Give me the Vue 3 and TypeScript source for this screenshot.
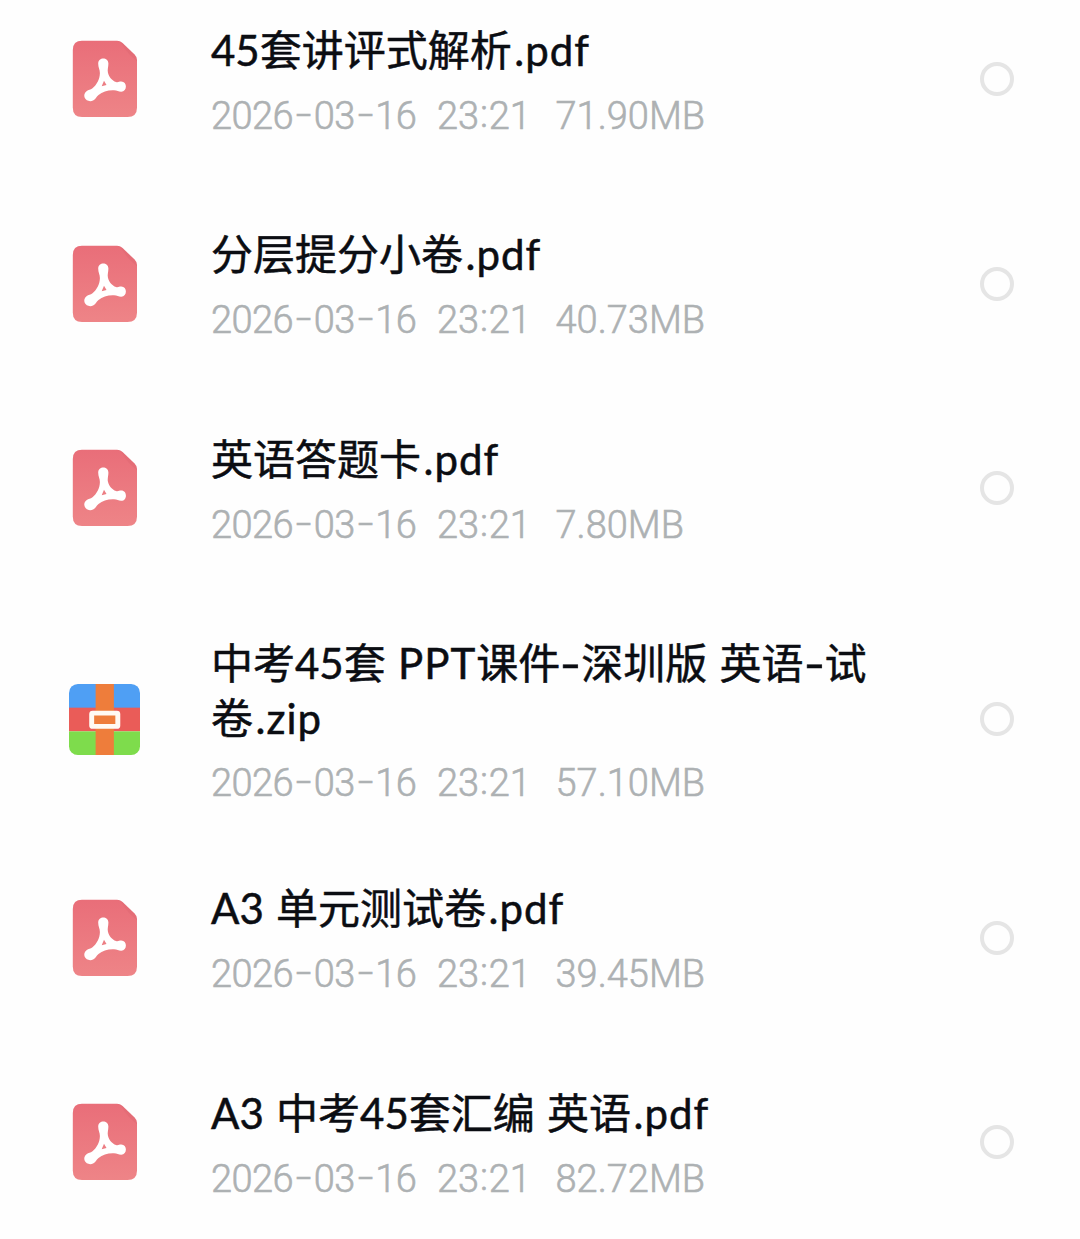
<script setup lang="ts">
interface FileEntry {
  kind: 'pdf' | 'zip'
  title: string[]
  size: string
}

const files: FileEntry[] = [
  { kind: 'pdf', title: ['45套讲评式解析.pdf'], size: '71.90MB' },
  { kind: 'pdf', title: ['分层提分小卷.pdf'], size: '40.73MB' },
  { kind: 'pdf', title: ['英语答题卡.pdf'], size: '7.80MB' },
  { kind: 'zip', title: ['中考45套 PPT课件-深圳版 英语-试', '卷.zip'], size: '57.10MB' },
  { kind: 'pdf', title: ['A3 单元测试卷.pdf'], size: '39.45MB' },
  { kind: 'pdf', title: ['A3 中考45套汇编 英语.pdf'], size: '82.72MB' },
]

const date = '2026-03-16'
const time = '23:21'

// Splits text into runs that need their own spacing: hyphens, colons, extensions, capitals.
const parts = (text: string): string[] => text.split(/(-|:|\.[a-z]+|PPT)/).filter(Boolean)
const kindOf = (part: string): string => {
  if (part === '-') return 'dash'
  if (part === ':') return 'colon'
  if (part === 'PPT') return 'caps'
  return part.startsWith('.') ? 'ext' : 'plain'
}
</script>

<template>
  <main class="list">
    <article v-for="file in files" :key="file.size" class="row" :class="file.kind">
      <div class="icon">
        <svg v-if="file.kind === 'pdf'" width="66" height="78" viewBox="0 0 66 78">
          <defs>
            <linearGradient id="pdfFill" x1="0" y1="0" x2="0" y2="1">
              <stop offset="0" stop-color="#e96e79" />
              <stop offset="1" stop-color="#ee8487" />
            </linearGradient>
          </defs>
          <path d="M10 .8H45Q48 .8 50.500 3L62.500 14.500Q65 17 65 20V67.500Q65 77 55.500 77H10Q.8 77 .8 67.500V10Q.8 .8 10 .8Z" fill="url(#pdfFill)" />
          <path d="M50.500 3L62.500 14.500Q65 17 65 20V21Q61 18 57 14Q52 8 48 1.500Z" fill="#dc6671" opacity=".4" />
          <path d="M26.200 23.500C26.200 16.700 36.400 16.700 36.400 23.500C36.400 27 35.300 29.500 35.900 32.500C37 37 40 40.700 44 42C46 42.600 47 41.600 49.200 41.600C55.500 41.600 55.500 51.800 49.200 51.800C46.500 51.800 45 50.500 42 50.300C36 50 30.500 51.800 26.500 55C24 57 23.800 59 21.500 60.300C15 63.800 8.800 56 14.500 51.300C16.500 49.700 18.500 50 20.500 48.300C25 44.500 27.800 39 27.900 33C27.900 29.500 26.200 27.500 26.200 23.500Z" fill="#fff" />
          <path d="M32 40.800L34.500 45L29.700 46.300Z" fill="#ec7d83" />
        </svg>
        <svg v-else width="71" height="71" viewBox="0 0 72 72">
          <clipPath id="zipClip"><rect width="72" height="72" rx="9" /></clipPath>
          <g clip-path="url(#zipClip)">
            <rect width="72" height="25" fill="#4f9ff4" />
            <rect y="24" width="72" height="24" fill="#ea5c58" />
            <rect y="48" width="72" height="24" fill="#7edc4c" />
            <rect x="27" width="18.500" height="72" fill="#ee7d3b" />
          </g>
          <rect x="23" y="29.500" width="26.500" height="13.500" rx="1" fill="#ee7d3b" stroke="#fffaf3" stroke-width="5" />
        </svg>
      </div>
      <div class="body">
        <h2 class="title">
          <span v-for="line in file.title" :key="line" class="line"><span v-for="(part, i) in parts(line)" :key="i" :class="kindOf(part)">{{ part }}</span></span>
        </h2>
        <p class="meta">
          <span class="date"><span v-for="(part, i) in parts(date)" :key="i" :class="kindOf(part)">{{ part }}</span></span>
          <span class="time"><span v-for="(part, i) in parts(time)" :key="i" :class="kindOf(part)">{{ part }}</span></span>
          <span class="size">{{ file.size }}</span>
        </p>
      </div>
      <span class="radio"></span>
    </article>
  </main>
</template>

<style>
body {
  margin: 0;
  background: #fefefe;
}
</style>

<style scoped>
.list {
  box-sizing: border-box;
  height: 1239px;
  padding-top: 22.600px;
  overflow: hidden;
  background: #fefefe;
  font-family: Lato, "Noto Sans CJK SC", sans-serif;
}
.row {
  display: flex;
  align-items: center;
  margin-bottom: 91.500px;
}
.row.zip {
  margin-bottom: 78.500px;
}
.icon {
  display: flex;
  justify-content: center;
  width: 72px;
  margin-left: 69px;
}
.icon svg {
  display: block;
}
.zip .icon {
  justify-content: flex-start;
}
.body {
  flex: 1;
  margin-left: 70px;
}
.title {
  margin: 0;
  font-size: 42px;
  font-weight: 400;
  line-height: 55px;
  word-spacing: 1.500px;
  color: #0b0d12;
  -webkit-text-stroke: 0.500px #0b0d12;
  white-space: nowrap;
}
.line {
  display: block;
  height: 55px;
}
.ext {
  margin-left: 2.500px;
  letter-spacing: 1px;
}
.caps {
  letter-spacing: 1px;
}
.meta {
  display: flex;
  height: 40px;
  margin: 18px 0 0;
  font-family: Roboto, sans-serif;
  font-size: 38px;
  font-weight: 300;
  line-height: 40px;
  color: #adb1b3;
  -webkit-text-stroke: 0.600px #adb1b3;
  white-space: nowrap;
}
.zip .meta {
  margin-top: 16.500px;
}
.date {
  width: 226px;
  letter-spacing: -0.550px;
}
.time {
  width: 118.500px;
}
.dash {
  display: inline-block;
  width: 20.500px;
  text-align: center;
  transform: scaleX(1.400);
}
.title .dash {
  width: 21px;
}
.meta .dash {
  transform: translateY(-2px) scaleX(1.450);
}
.meta .colon {
  display: inline-block;
  width: 9.500px;
  text-align: center;
  transform: translateY(-2px);
}
.radio {
  box-sizing: border-box;
  width: 34px;
  height: 34px;
  margin-right: 66px;
  border: 4px solid #e5e5e5;
  border-radius: 50%;
}
</style>
